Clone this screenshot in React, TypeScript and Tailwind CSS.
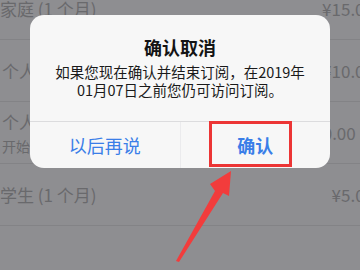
import React from "react";

const rowCls =
  "h-[62px] w-[374px] flex items-center justify-between border-b border-[#838386] text-[#69696c]";

export default function App() {
  return (
    <div
      className="relative w-[360px] h-[270px] overflow-hidden bg-[#8e8e91]"
      style={{ fontFamily: '"Noto Sans CJK SC", "Noto Sans", sans-serif' }}
    >
      <div className="flex flex-col mt-[-22px]">
        <div className={rowCls}>
          <span className="text-[17px]">家庭 (1 个月)</span>
          <span className="text-[17px]">¥15.00</span>
        </div>
        <div className={rowCls}>
          <span className="text-[17px] ml-[2px]">个人</span>
          <span className="text-[17px]">¥10.00</span>
        </div>
        <div className={rowCls}>
          <div className="flex flex-col ml-[2px]">
            <span className="text-[17px] leading-[26px]">个人</span>
            <span className="text-[14px] leading-[22px]">开始</span>
          </div>
          <span className="text-[17px] flex items-center gap-[6px] mr-[2px]">
            ¥10.00
            <span className="text-[#3d6fc0] text-[15px]">✓</span>
          </span>
        </div>
        <div className={rowCls}>
          <span className="text-[17px]">学生 (1 个月)</span>
          <span className="text-[17px]">¥5.00</span>
        </div>
        <div className={rowCls}></div>
      </div>

      <div className="absolute left-[30px] top-[15px] w-[300px] rounded-[14px] bg-[#f7f7f7] flex flex-col">
        <div className="flex flex-col items-center pt-[19px] pb-[22px] px-[12px]">
          <div className="text-[18px] font-bold leading-[26px] text-[#141414]">确认取消</div>
          <div className="text-[14.5px] leading-[18px] text-[#1a1a1a] text-center mt-[3px]">
            如果您现在确认并结束订阅，在2019年
            <br />
            01月07日之前您仍可访问订阅。
          </div>
        </div>
        <div className="flex border-t border-[#dcdcde] h-[47px]">
          <div className="flex-1 flex items-center justify-center text-[18px] text-[#3a7ee8] border-r border-[#ebebed]">
            以后再说
          </div>
          <div className="flex-1 flex items-center justify-center text-[18px] font-semibold text-[#3a7ee8]">
            确认
          </div>
        </div>
        <div className="absolute left-[179px] top-[106px] w-[83px] h-[46px] border-[3px] border-[#ec3535]"></div>
      </div>

      <svg className="absolute left-0 top-0" width="360" height="270" viewBox="0 0 360 270">
        <polygon
          points="176,261 215,191 210,184 231,171 229,196 223,193 179,262"
          fill="#f23c3c"
        />
      </svg>
    </div>
  );
}
